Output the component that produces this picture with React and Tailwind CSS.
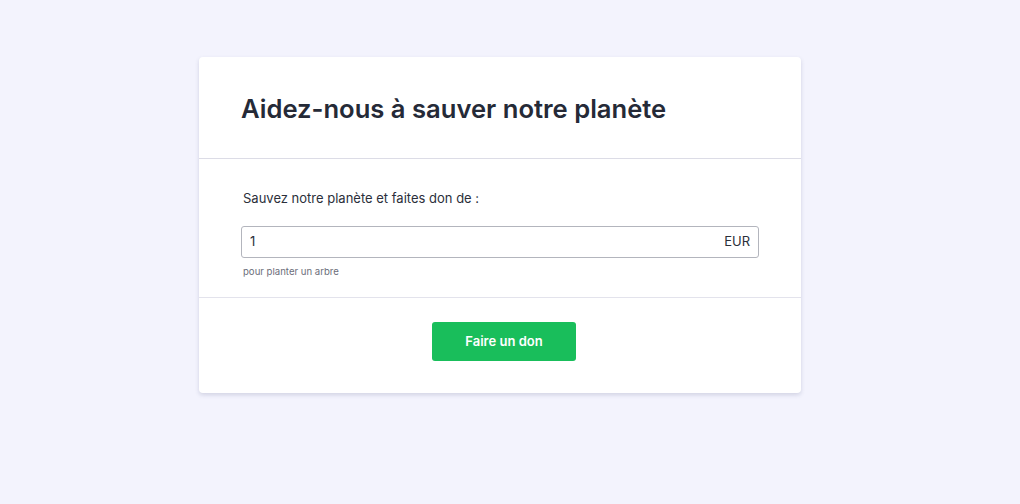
import React, { useState } from "react";

const App = () => {
  const [amount, setAmount] = useState("1");

  return (
    <div
      className="min-h-[504px] w-full bg-[#f3f3fd] pt-[57px] pl-[199px]"
      style={{ fontFamily: "Inter, 'Noto Sans', sans-serif" }}
    >
      <div className="w-[602px] rounded-[4px] bg-white shadow-[0_2px_4px_rgba(60,64,110,0.18)]">
        <div className="flex h-[102px] items-center border-b border-[#dcdce6] px-[42px] pt-[2px]">
          <h1 className="text-[25.6px] font-semibold leading-none text-[#252a37]">
            Aidez-nous à sauver notre planète
          </h1>
        </div>

        <div className="border-b border-[#e3e3ec] px-[42px] pt-[29px] pb-[18px]">
          <label className="ml-[2px] block text-[13px] leading-[20px] text-[#2b2f3a]">
            Sauvez notre planète et faites don de :
          </label>
          <div className="mt-[18px] flex h-[32px] items-center rounded-[3px] border border-[#b3b5bd] px-[8px]">
            <input
              type="text"
              value={amount}
              onChange={(e) => setAmount(e.target.value)}
              className="flex-1 bg-transparent text-[13px] text-[#2b2f3a] outline-none"
            />
            <span className="text-[13px] text-[#2b2f3a]">EUR</span>
          </div>
          <p className="mt-[7px] ml-[2px] text-[9.6px] leading-[14px] text-[#6b6e7a]">
            pour planter un arbre
          </p>
        </div>

        <div className="flex justify-center pt-[24px] pb-[32px] pl-[8px]">
          <button className="h-[39px] w-[144px] rounded-[3px] bg-[#19be5b] text-[13px] font-semibold text-white">
            Faire un don
          </button>
        </div>
      </div>
    </div>
  );
};

export default App;
